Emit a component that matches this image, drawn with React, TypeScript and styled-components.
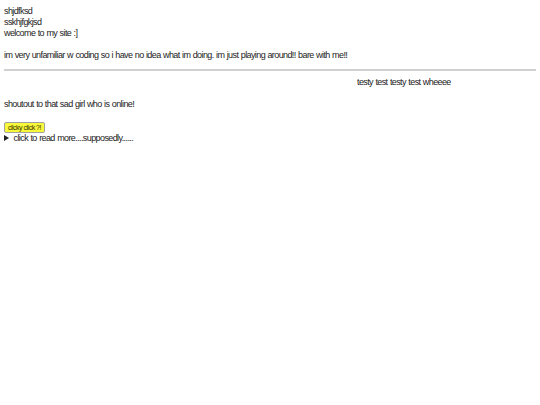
import React from 'react';
import styled, { createGlobalStyle } from 'styled-components';

const GlobalStyle = createGlobalStyle`
  html, body {
    margin: 0;
    background: #ffffff;
  }
  body {
    padding: 4px;
    font-family: "Liberation Sans", Arial, sans-serif;
    font-size: 9px;
    letter-spacing: -0.6px;
    word-spacing: 0.5px;
    line-height: 11px;
    color: #222222;
  }
`;

const Page = styled.div`
  display: flex;
  flex-direction: column;
`;

const Intro = styled.div`
  margin-top: 2px;
`;

const Para = styled.p`
  margin: 11px 0 0;
`;

const Rule = styled.hr`
  margin: 8px 0 0;
  border: none;
  border-top: 2px solid #d0d0d0;
  height: 0;
`;

const Ticker = styled.div`
  margin-top: 6px;
  padding-left: 353px;
  white-space: nowrap;
`;

const ClickButton = styled.button`
  align-self: flex-start;
  margin-top: 12px;
  padding: 0 3px;
  font-family: inherit;
  font-size: 7px;
  letter-spacing: -0.5px;
  word-spacing: 0;
  line-height: 9px;
  color: #333300;
  background: #f8f83a;
  border: 1px solid #a0a0a0;
  border-radius: 2px;
`;

const More = styled.details`
  margin-top: 0;
  summary {
    cursor: pointer;
  }
`;

export default function App() {
  return (
    <Page>
      <GlobalStyle />
      <Intro>
        shjdfksd
        <br />
        sskhjfgkjsd
        <br />
        welcome to my site :]
      </Intro>
      <Para>im very unfamiliar w coding so i have no idea what im doing. im just playing around!! bare with me!!</Para>
      <Rule />
      <Ticker>testy test testy test wheeee</Ticker>
      <Para>shoutout to that sad girl who is online!</Para>
      <ClickButton>clicky click ?!</ClickButton>
      <More>
        <summary>click to read more....supposedly......</summary>
      </More>
    </Page>
  );
}
